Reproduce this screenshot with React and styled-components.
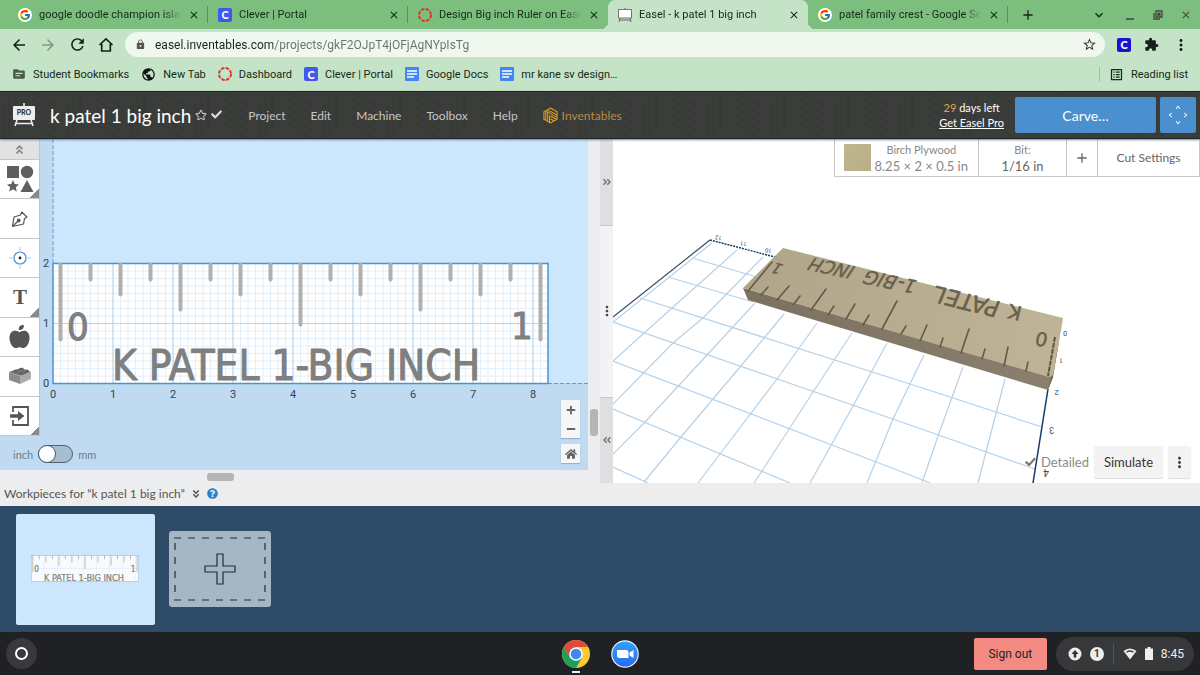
import React from 'react';
import styled, { createGlobalStyle, css } from 'styled-components';
import { FcGoogle } from 'react-icons/fc';
import {
  FaAngleDoubleDown,
  FaAngleDoubleLeft,
  FaAngleDoubleRight,
  FaAngleDoubleUp,
  FaAppleAlt,
  FaCheck,
  FaHome,
  FaMinus,
  FaPlus,
  FaQuestionCircle,
  FaRegStar,
} from 'react-icons/fa';
import {
  MdAdd,
  MdArrowBack,
  MdArrowForward,
  MdClose,
  MdExtension,
  MdKeyboardArrowDown,
  MdLock,
  MdMoreVert,
  MdOutlineListAlt,
  MdPublic,
  MdRefresh,
  MdStarBorder,
  MdTopic,
} from 'react-icons/md';

const tabs = [
  { title: 'google doodle champion islan', icon: 'google' },
  { title: 'Clever | Portal', icon: 'clever' },
  { title: 'Design Big inch Ruler on Easel', icon: 'canvas', last: true },
  { title: 'Easel - k patel 1 big inch', icon: 'easel', active: true },
  { title: 'patel family crest - Google Sea', icon: 'google' },
];

const bookmarks = [
  { title: 'Student Bookmarks', icon: 'folder' },
  { title: 'New Tab', icon: 'globe' },
  { title: 'Dashboard', icon: 'canvas' },
  { title: 'Clever | Portal', icon: 'clever' },
  { title: 'Google Docs', icon: 'docs' },
  { title: 'mr kane sv design…', icon: 'docs' },
];

const menus = ['Project', 'Edit', 'Machine', 'Toolbox', 'Help'];

const tools = [
  { name: 'Shapes', more: true, icon: <ShapesIcon /> },
  { name: 'Pen', icon: <PenIcon /> },
  { name: 'Drill point', icon: <DrillIcon /> },
  { name: 'Text', more: true, icon: <TextIcon /> },
  { name: 'Icons', icon: <FaAppleAlt size={23} /> },
  { name: 'Apps', icon: <BrickIcon /> },
  { name: 'Import', more: true, icon: <ImportIcon /> },
];

// tick ends below the top edge, one every half unit
const ticks = [78, 18, 33, 18, 48, 18, 33, 18, 63, 18, 33, 18, 48, 18, 33, 18, 78];

const bedLines = [
  'M79 119 L144 138',
  'M27 159 L297 245 L429 288',
  'M0 183 L297 286 L422 330',
  'M0 222 L297 336 L317 344',
  'M0 270 L177 344',
  'M0 328 L35 344',
  'M99 104 L0 183',
  'M55 138 L140 163',
  'M124 111 L59 169 L0 222',
  'M150 118 L90 179 L60 204 L0 265',
  'M142 164 L94 216 L32 283 L0 315',
  'M171 175 L127 228 L68 298 L31 343',
  'M204 184 L164 240 L107 315 L85 344',
  'M239 194 L200 253 L149 332 L141 344',
  'M274 204 L240 267 L197 344',
  'M311 216 L280 280 L254 344',
  'M350 228 L325 297 L309 344',
  'M392 240 L373 313 L365 344',
];

const boardTicks = [
  [135, 152, 159, 123],
  [148, 156, 155, 148],
  [164, 161, 176, 147],
  [180, 166, 187, 157],
  [198, 171, 213, 150],
  [215, 176, 221, 167],
  [233, 180, 242, 165],
  [250, 186, 256, 176],
  [269, 190, 284, 162],
  [288, 195, 293, 187],
  [307, 202, 314, 186],
  [327, 208, 330, 199],
  [348, 214, 356, 190],
  [369, 220, 372, 210],
  [391, 227, 395, 208],
  [413, 232, 415, 223],
];

function SiteIcon({ name }) {
  if (name === 'google') return <Round><FcGoogle size={12} /></Round>;
  if (name === 'clever') return <Clever>C</Clever>;
  if (name === 'canvas') {
    return (
      <svg width="14" height="14" viewBox="0 0 14 14" fill="none">
        <circle cx="7" cy="7" r="6" stroke="#d93a2b" strokeWidth="2" strokeDasharray="3.4 1.3" />
      </svg>
    );
  }
  if (name === 'docs') {
    return (
      <svg width="14" height="14" viewBox="0 0 14 14">
        <rect width="14" height="14" rx="1" fill="#4285f4" />
        <path d="M2 4h10M2 7h10M2 10h7" stroke="#fff" strokeWidth="1.3" />
      </svg>
    );
  }
  if (name === 'folder') return <MdTopic size={14} color="#4a5a4b" />;
  if (name === 'globe') return <MdPublic size={15} color="#111" />;
  return (
    <svg width="14" height="14" viewBox="0 0 14 14">
      <path d="M2 10l-1 4M12 10l1 4M1.500 12h11M7 0v2" stroke="#666" />
      <rect x="0.500" y="1.500" width="13" height="8.500" fill="#fff" stroke="#777" />
    </svg>
  );
}

function HomeIcon() {
  return (
    <svg width="16" height="16" viewBox="0 0 16 16" fill="none" stroke="currentColor" strokeWidth="1.700">
      <path d="M1.500 8L8 2l6.500 6M3.700 7v7h8.600V7" />
    </svg>
  );
}

function RestoreIcon() {
  return (
    <svg width="10" height="10" viewBox="0 0 10 10" fill="none" stroke="#444" strokeWidth="1.300">
      <path d="M3 1h6v6H3zM1 3v6h6" />
      <path d="M5 3.500h2v1.500H5z" />
    </svg>
  );
}

function ShapesIcon() {
  return (
    <svg width="28" height="28" viewBox="0 0 28 28" fill="#5f5f5f">
      <rect x="1" y="1" width="12" height="12" />
      <circle cx="21" cy="7" r="6.200" />
      <path d="M7 15l1.700 4 4.300.4-3.200 2.900 1 4.200L7 24.200l-3.800 2.300 1-4.200L1 19.400l4.300-.4z" />
      <path d="M21 15l6.500 12h-13z" />
    </svg>
  );
}

function PenIcon() {
  return (
    <svg width="18" height="18" viewBox="0 0 18 18" fill="none" stroke="#555" strokeWidth="1.200">
      <path d="M1.500 16.500L3 7l6.500-2 1.200-3L16 7l-2.500 1.700L12.500 14z" strokeLinejoin="round" />
      <path d="M2 16l4.500-4.500" />
      <circle cx="7.700" cy="10.500" r="1.300" fill="#555" />
    </svg>
  );
}

function DrillIcon() {
  return (
    <svg width="22" height="22" viewBox="0 0 22 22" fill="none">
      <circle cx="11" cy="11" r="6" stroke="#4a8fd3" strokeWidth="1.200" />
      <path d="M11 0v4M11 18v4M0 11h4M18 11h4" stroke="#a9cbee" />
      <circle cx="11" cy="11" r="1.400" fill="#222" />
    </svg>
  );
}

function TextIcon() {
  return (
    <svg width="20" height="20" viewBox="0 0 20 20">
      <text x="10" y="17" textAnchor="middle" fontFamily="Liberation Serif, serif" fontWeight="700" fontSize="21" fill="#555">T</text>
    </svg>
  );
}

function BrickIcon() {
  return (
    <svg width="24" height="18" viewBox="0 0 24 18">
      <path d="M1 5l12-4 10 4-10 4z" fill="#666" />
      <path d="M1 5l11 4v8L1 13z" fill="#8c8c8c" />
      <path d="M12 9l11-4v7l-11 5z" fill="#aaa" />
      <g fill="#555" stroke="#999" strokeWidth=".5">
        <ellipse cx="8" cy="4" rx="2.500" ry="1.300" />
        <ellipse cx="13.500" cy="2.200" rx="2.500" ry="1.300" />
        <ellipse cx="13" cy="6" rx="2.500" ry="1.300" />
        <ellipse cx="18.500" cy="4" rx="2.500" ry="1.300" />
      </g>
    </svg>
  );
}

function ImportIcon() {
  return (
    <svg width="20" height="20" viewBox="0 0 20 20">
      <path d="M3 6V1h15v18H3v-5" fill="none" stroke="#555" strokeWidth="1.800" />
      <path d="M0 8.300h8V5l6.500 5L8 15v-3.300H0z" fill="#555" />
    </svg>
  );
}

function EaselLogo() {
  return (
    <svg width="24" height="24" viewBox="0 0 24 24">
      <path d="M5 17l-2 6M19 17l2 6M3 20.500h18M12 0v4" stroke="#ededed" strokeWidth="1.600" />
      <rect x="1" y="3" width="22" height="14" rx="1" fill="#ededed" />
      <text x="12" y="12" textAnchor="middle" fontFamily="Lato, sans-serif" fontWeight="900" fontSize="7" fill="#333">PRO</text>
    </svg>
  );
}

function InventablesLogo() {
  return (
    <svg width="15" height="17" viewBox="0 0 16 18" fill="none" stroke="#e9a21b" strokeWidth="1.100">
      <path d="M8 1l7 4v8l-7 4-7-4V5z" />
      <path d="M3 5v8.500M5 6v8.500M7 9v7.500M3.500 4.500L8 7l7 4M5.500 3.300L15 8.500M8 9.500l6 3.500M8 12.500l4 2.500" />
    </svg>
  );
}

function Ruler() {
  const minor = [];
  for (let i = 1; i < 66; i += 1) minor.push(`M${i * 7.5} 0V120`);
  for (let i = 1; i < 16; i += 1) minor.push(`M0 ${i * 7.5}H495`);
  return (
    <g>
      <rect width="495" height="120" fill="#fff" />
      <path d={minor.join('')} stroke="#e2eef9" />
      <path d="M60 0V120M120 0V120M180 0V120M240 0V120M300 0V120M360 0V120M420 0V120M480 0V120M0 60H495" stroke="#b7d4f0" />
      <rect width="495" height="120" fill="none" stroke="#4c92cb" strokeWidth="1.500" />
      {ticks.map((end, i) => (
        <line key={i} x1={7.5 + i * 30} x2={7.5 + i * 30} y1="1" y2={end - 2} stroke="#b0b0b0" strokeWidth="4" strokeLinecap="round" />
      ))}
      <Lettering>
        <text x="14" y="76" fontSize="38">0</text>
        <text x="458" y="75" fontSize="38">1</text>
        <text x="59" y="116" fontSize="42">K PATEL 1-BIG INCH</text>
      </Lettering>
    </g>
  );
}

function Canvas() {
  return (
    <Drawing viewBox="0 0 588 331" preserveAspectRatio="xMinYMin slice">
      <rect width="588" height="331" fill="#bfdaf1" />
      <rect x="53" width="535" height="244" fill="#cbe6fd" />
      <path d="M53 0V124M548 244.500H588" stroke="#5b9fd8" strokeDasharray="4 2" />
      <g transform="translate(53 124.500)"><Ruler /></g>
      <g fontFamily="Roboto, sans-serif" fontSize="11" fill="#345" textAnchor="middle">
        {[0, 1, 2, 3, 4, 5, 6, 7, 8].map((n) => <text key={n} x={53 + n * 60} y="259">{n}</text>)}
        {[0, 1, 2].map((n) => <text key={n} x="46" y={248 - n * 60}>{n}</text>)}
      </g>
    </Drawing>
  );
}

function Preview() {
  return (
    <Drawing viewBox="0 0 587 344" preserveAspectRatio="xMinYMin slice">
      <defs>
        <linearGradient id="wood" x1="0" x2="1">
          <stop offset="0" stopColor="#b0a48a" />
          <stop offset="1" stopColor="#bfb497" />
        </linearGradient>
        <linearGradient id="edge" x1="0" x2="1">
          <stop offset="0" stopColor="#7b715e" />
          <stop offset="1" stopColor="#8b806e" />
        </linearGradient>
      </defs>
      <path d={bedLines.join('')} fill="none" stroke="#b4d1ea" strokeWidth="1.200" />
      <path d="M97 101L0 178" stroke="#3b4b60" strokeWidth="1.200" />
      <path d="M97 101L162 118" stroke="#173d63" strokeWidth="1.500" strokeDasharray="2 1" />
      <path d="M435 250L420 344" stroke="#123b66" strokeWidth="1.500" />
      <path d="M130 149L440 238L435 251L135 161z" fill="url(#edge)" />
      <path d="M440 238L435 251L448 192L450 179z" fill="#6f6554" />
      <path d="M170 109L450 179L440 236L436 238L130 149z" fill="url(#wood)" />
      {boardTicks.map(([x1, y1, x2, y2]) => (
        <line key={x1} x1={x1} y1={y1} x2={x2} y2={y2} stroke="#645a46" strokeWidth="1.600" strokeLinecap="round" />
      ))}
      <path d="M442 198L435 237" stroke="#5e543e" strokeWidth="2" strokeDasharray="5 1" />
      <Engraving>
        <text transform="translate(410 168) rotate(194)" fontSize="20">K</text>
        <text transform="translate(389 163) rotate(194) skewX(-8)" fontSize="23">PATEL</text>
        <text transform="translate(306 142) rotate(193) skewX(-14)" fontSize="19">1-</text>
        <text transform="translate(287 138) rotate(192) skewX(-18)" fontSize="19">BIG</text>
        <text transform="translate(244 128) rotate(192) skewX(-22)" fontSize="18">INCH</text>
        <text transform="translate(436 195) rotate(194)" fontSize="19">0</text>
        <text transform="translate(172 126) rotate(195) skewX(-22)" fontSize="15">1</text>
      </Engraving>
      <g fontFamily="Roboto, sans-serif" fontSize="7" fill="#334b66">
        <text transform="translate(454 192) rotate(180)">0</text>
        <text transform="translate(450 219) rotate(180)">1</text>
        <text transform="translate(446 251) rotate(180)" fontSize="8">2</text>
        <text transform="translate(441 288) rotate(180)" fontSize="9">3</text>
        <text transform="translate(436 330) rotate(180)" fontSize="10">4</text>
        <text transform="translate(159 110) rotate(190)" fontSize="6">10</text>
        <text transform="translate(134 103) rotate(190)" fontSize="6">11</text>
        <text transform="translate(109 97) rotate(190)" fontSize="6">12</text>
      </g>
    </Drawing>
  );
}

function ChromeIcon() {
  return (
    <svg width="28" height="28" viewBox="0 0 28 28">
      <circle cx="14" cy="14" r="14" fill="#fbc934" />
      <path d="M14 14L14 7H26.100A14 14 0 0 0 1.900 7L8 17.500z" fill="#dd4b3e" />
      <path d="M1.900 7A14 14 0 0 0 14 28L20 17.500L8 17.500z" fill="#1fa05a" />
      <circle cx="14" cy="14" r="6.800" fill="#fff" />
      <circle cx="14" cy="14" r="5.300" fill="#4285f4" />
    </svg>
  );
}

function ZoomIcon() {
  return (
    <svg width="28" height="28" viewBox="0 0 28 28">
      <defs>
        <linearGradient id="zoomBlue" x1="0" x2="0" y1="0" y2="1">
          <stop offset="0" stopColor="#2fa3fb" />
          <stop offset="1" stopColor="#2a68f0" />
        </linearGradient>
      </defs>
      <circle cx="14" cy="14" r="13.200" fill="url(#zoomBlue)" stroke="#e6f0fa" strokeWidth="1.200" />
      <path d="M6 10h9a2.500 2.500 0 0 1 2.500 2.500V18h-9A2.500 2.500 0 0 1 6 15.500zM18.500 12.500L22.500 10v8l-4-2.500z" fill="#fff" />
    </svg>
  );
}

function App() {
  return (
    <Page>
      <Global />
      <TabStrip>
        {tabs.map((tab, i) => (
          <Tab key={i} $active={tab.active} $last={tab.last}>
            <SiteIcon name={tab.icon} />
            <TabTitle type="button">{tab.title}</TabTitle>
            <IconButton type="button" aria-label="Close tab"><MdClose size={12} /></IconButton>
          </Tab>
        ))}
        <NewTab type="button" aria-label="New tab"><MdAdd size={16} /></NewTab>
        <WindowButtons>
          <IconButton type="button" aria-label="Search tabs"><MdKeyboardArrowDown size={16} /></IconButton>
          <IconButton type="button" aria-label="Minimize">
            <svg width="12" height="12" viewBox="0 0 12 12"><path d="M2 10h8" stroke="#444" strokeWidth="1.500" /></svg>
          </IconButton>
          <IconButton type="button" aria-label="Restore"><RestoreIcon /></IconButton>
          <IconButton type="button" aria-label="Close window"><MdClose size={12} color="#444" /></IconButton>
        </WindowButtons>
      </TabStrip>

      <AddressRow>
        <IconButton type="button" aria-label="Back"><MdArrowBack size={18} /></IconButton>
        <IconButton type="button" aria-label="Forward"><MdArrowForward size={18} color="#7f9a80" /></IconButton>
        <IconButton type="button" aria-label="Reload"><MdRefresh size={19} /></IconButton>
        <IconButton type="button" aria-label="Home"><HomeIcon /></IconButton>
        <AddressBar>
          <MdLock size={11} color="#555" />
          <Url aria-label="Address" defaultValue="easel.inventables.com/projects/gkF2OJpT4jOFjAgNYpIsTg" />
          <MdStarBorder size={15} color="#333" />
        </AddressBar>
        <Extensions>
          <Clever as="button" type="button" $dark>C</Clever>
          <IconButton type="button" aria-label="Extensions"><MdExtension size={15} /></IconButton>
          <IconButton type="button" aria-label="Menu"><MdMoreVert size={18} /></IconButton>
        </Extensions>
      </AddressRow>

      <Bookmarks>
        {bookmarks.map((b, i) => (
          <Bookmark key={i} href="#"><SiteIcon name={b.icon} />{b.title}</Bookmark>
        ))}
        <ReadingList type="button"><MdOutlineListAlt size={15} />Reading list</ReadingList>
      </Bookmarks>

      <Header>
        <Backdrop aria-hidden="true">
          <defs>
            <pattern id="weave" width="64" height="48" patternUnits="userSpaceOnUse">
              <path d="M4 12v36M10 8v36M16 4v36M32 0l24 14M32 8l24 14M32 16l24 14M32 24l24 14M32 32l24 14" fill="none" stroke="#343634" strokeWidth="3" />
            </pattern>
          </defs>
          <rect width="100%" height="100%" fill="url(#weave)" />
        </Backdrop>
        <EaselLogo />
        <Title>k patel 1 big inch</Title>
        <TitleIcons>
          <FaRegStar size={12} color="#c9c9c9" />
          <FaCheck size={11} color="#ddd" />
        </TitleIcons>
        <Menu>
          {menus.map((m) => <MenuButton key={m} type="button">{m}</MenuButton>)}
          <MenuButton type="button" $gold><InventablesLogo />Inventables</MenuButton>
        </Menu>
        <Trial>
          <div><b>29</b> days left</div>
          <a href="#">Get Easel Pro</a>
        </Trial>
        <Carve type="button">Carve…</Carve>
        <Jog type="button" aria-label="Jog machine">
          <svg width="20" height="20" viewBox="0 0 20 20" fill="none" stroke="#fff">
            <path d="M8 4l2-3 2 3M8 16l2 3 2-3M4 8l-3 2 3 2M16 8l3 2-3 2" />
          </svg>
        </Jog>
      </Header>

      <Workspace>
        <Designer>
          <CanvasArea>
            <Canvas />
            <Toolbar>
              <Collapse type="button" aria-label="Collapse tools"><FaAngleDoubleUp size={11} /></Collapse>
              {tools.map((t) => (
                <Tool key={t.name} type="button" aria-label={t.name} $more={t.more}>{t.icon}</Tool>
              ))}
            </Toolbar>
            <Units>
              inch
              <Switch type="checkbox" role="switch" />
              mm
            </Units>
            <ZoomButtons>
              <ZoomPair>
                <ZoomButton type="button" aria-label="Zoom in"><FaPlus size={10} /></ZoomButton>
                <ZoomButton type="button" aria-label="Zoom out"><FaMinus size={10} /></ZoomButton>
              </ZoomPair>
              <ZoomPair>
                <ZoomButton type="button" aria-label="Zoom home"><FaHome size={12} /></ZoomButton>
              </ZoomPair>
            </ZoomButtons>
          </CanvasArea>
          <VerticalTrack><VerticalThumb /></VerticalTrack>
          <HorizontalTrack><HorizontalThumb /></HorizontalTrack>
        </Designer>
        <Splitter>
          <SplitButton type="button" aria-label="Expand right"><FaAngleDoubleRight size={10} /></SplitButton>
          <SplitHandle><MdMoreVert size={16} /></SplitHandle>
          <SplitButton type="button" aria-label="Expand left"><FaAngleDoubleLeft size={10} /></SplitButton>
        </Splitter>
        <PreviewArea>
          <Preview />
          <Settings>
            <Material type="button">
              <Swatch />
              <Stack><small>Birch Plywood</small><span>8.25 × 2 × 0.5 in</span></Stack>
            </Material>
            <Bit type="button"><Stack $dark><small>Bit:</small><span>1/16 in</span></Stack></Bit>
            <AddBit type="button" aria-label="Add bit"><MdAdd size={16} /></AddBit>
            <CutSettings type="button">Cut Settings</CutSettings>
          </Settings>
          <PreviewControls>
            <Detailed><CheckBox type="checkbox" defaultChecked />Detailed</Detailed>
            <Simulate type="button">Simulate</Simulate>
            <More type="button" aria-label="More options"><MdMoreVert size={17} /></More>
          </PreviewControls>
        </PreviewArea>
      </Workspace>

      <Workpieces>
        Workpieces for “k patel 1 big inch”
        <FaAngleDoubleDown size={10} />
        <FaQuestionCircle size={11} color="#2d7fc4" />
      </Workpieces>
      <Tray>
        <Thumb type="button" aria-label="Workpiece 1">
          <Drawing viewBox="-70 -190 640 510"><Ruler /></Drawing>
        </Thumb>
        <AddPiece type="button" aria-label="Add workpiece">
          <svg width="102" height="76" viewBox="0 0 102 76" fill="none" stroke="#1e2d3b">
            <path d="M5 7H97M5 69H97" strokeDasharray="7 7" strokeWidth="1.200" />
            <path d="M6 12V66M96 12V66" strokeDasharray="7 7" strokeWidth="1.200" />
            <path d="M48 23h6v12h12v6H54v12h-6V41H36v-6h12z" strokeWidth="1.200" />
          </svg>
        </AddPiece>
      </Tray>

      <Shelf>
        <Launcher type="button" aria-label="Launcher"><Ring /></Launcher>
        <Apps>
          <AppButton type="button" aria-label="Chrome" $open><ChromeIcon /></AppButton>
          <AppButton type="button" aria-label="Zoom"><ZoomIcon /></AppButton>
        </Apps>
        <Status>
          <SignOut type="button">Sign out</SignOut>
          <StatusPill type="button">
            <svg width="14" height="14" viewBox="0 0 14 14">
              <circle cx="7" cy="7" r="6.500" fill="#eee" />
              <path d="M7 3l3.500 4H8.300v3.500H5.700V7H3.500z" fill="#333" />
            </svg>
            <Count>1</Count>
            <Divider />
            <svg width="14" height="12" viewBox="0 0 14 12">
              <path d="M7 11.500L.5 3Q7-2 13.500 3z" fill="#eee" />
              <path d="M3.500 4.200Q7 1.800 10.500 4.200" stroke="#37383a" strokeWidth="1.300" fill="none" />
            </svg>
            <svg width="8" height="13" viewBox="0 0 8 13"><path d="M2.500 0h3v1.500H8V13H0V1.500h2.500z" fill="#eee" /></svg>
            8:45
          </StatusPill>
        </Status>
      </Shelf>
    </Page>
  );
}

const Global = createGlobalStyle`
  * {
    box-sizing: border-box;
  }
  body {
    margin: 0;
    font-family: Lato, sans-serif;
  }
  button {
    margin: 0;
    padding: 0;
    border: 0;
    background: none;
    font: inherit;
    color: inherit;
  }
  a {
    color: inherit;
    text-decoration: none;
  }
  svg {
    display: block;
    flex: none;
  }
`;

const Page = styled.div`
  min-height: 100vh;
  display: flex;
  flex-direction: column;
`;

const centered = css`
  display: flex;
  align-items: center;
  justify-content: center;
`;

const IconButton = styled.button`
  ${centered}
  flex: none;
`;

const TabStrip = styled.div`
  display: flex;
  height: 29px;
  padding-left: 8px;
  background: #7bbe7d;
  color: #16291a;
  font: 11px Roboto, sans-serif;
`;

const Tab = styled.div`
  position: relative;
  flex: 0 1 200px;
  min-width: 0;
  display: flex;
  align-items: center;
  gap: 7px;
  padding: 0 8px 0 10px;
  border-radius: 7px 7px 0 0;
  background: ${(p) => (p.$active ? '#c5e3c6' : 'none')};

  ${(p) => !p.$active && !p.$last && css`
    &::after {
      content: '';
      position: absolute;
      right: 0;
      top: 6px;
      width: 1px;
      height: 17px;
      background: #549457;
    }
  `}
  ${(p) => p.$active && css`
    &::before, &::after {
      content: '';
      position: absolute;
      bottom: 0;
      left: -7px;
      width: 7px;
      height: 7px;
      background: radial-gradient(circle at 0 0, #7bbe7d 7px, #c5e3c6 7px);
    }
    &::after {
      left: auto;
      right: -7px;
      background: radial-gradient(circle at 100% 0, #7bbe7d 7px, #c5e3c6 7px);
    }
  `}
`;

const TabTitle = styled.button`
  flex: 1;
  min-width: 0;
  overflow: hidden;
  white-space: nowrap;
  text-align: left;
  mask-image: linear-gradient(to right, #000 88%, transparent);
`;

const Round = styled.span`
  ${centered}
  flex: none;
  width: 14px;
  height: 14px;
  border-radius: 50%;
  background: #fff;
`;

const Clever = styled.span`
  ${centered}
  flex: none;
  width: 14px;
  height: 14px;
  border-radius: 2px;
  background: ${(p) => (p.$dark ? '#1a14d0' : '#4257ee')};
  color: #fff;
  font: 900 11px Lato, sans-serif;
`;

const NewTab = styled(IconButton)`
  width: 40px;
`;

const WindowButtons = styled.div`
  margin-left: auto;
  display: flex;
  align-items: center;
  gap: 17px;
  padding-right: 8px;
`;

const AddressRow = styled.div`
  display: flex;
  align-items: center;
  gap: 11px;
  height: 31px;
  padding: 0 10px;
  background: #c5e3c6;
  color: #15211a;
`;

const AddressBar = styled.div`
  flex: 1;
  display: flex;
  align-items: center;
  gap: 9px;
  height: 25px;
  padding: 0 8px 0 10px;
  border-radius: 13px;
  background: #eff7ef;
`;

const Url = styled.input`
  flex: 1;
  min-width: 0;
  padding: 0;
  border: 0;
  outline: 0;
  font: 12px Roboto, sans-serif;
  color: transparent;
  background: linear-gradient(to right, #1c241d 118px, #6b736c 118px);
  background-clip: text;
`;

const Extensions = styled.div`
  display: flex;
  align-items: center;
  gap: 13px;
  padding-left: 1px;
`;

const Bookmarks = styled.nav`
  display: flex;
  align-items: center;
  gap: 12px;
  height: 31px;
  padding: 0 12px 3px;
  background: #c5e3c6;
  color: #16291a;
  font: 11px Roboto, sans-serif;
`;

const Bookmark = styled.a`
  display: flex;
  align-items: center;
  gap: 7px;
`;

const ReadingList = styled.button`
  display: flex;
  align-items: center;
  gap: 7px;
  margin-left: auto;
  padding-left: 9px;
  border-left: 1px solid #9cc29d;
`;

const Header = styled.header`
  position: relative;
  z-index: 1;
  display: flex;
  align-items: center;
  height: 48px;
  padding: 0 4px 0 12px;
  background: #3b3d3b;
  border-top: 1px solid #222;
  border-bottom: 1px solid #222;
  box-shadow: 0 1px 2px #6786a5;
  color: #fff;
`;

const Backdrop = styled.svg`
  position: absolute;
  inset: 0;
  z-index: -1;
  width: 100%;
  height: 100%;
  opacity: 0.4;
`;

const Title = styled.h1`
  margin: 0 0 0 14px;
  font-size: 19px;
  font-weight: 400;
  white-space: nowrap;
`;

const TitleIcons = styled.span`
  display: flex;
  gap: 4px;
  margin-left: 4px;
`;

const Menu = styled.nav`
  display: flex;
  gap: 25px;
  margin-left: 26px;
`;

const MenuButton = styled.button`
  display: flex;
  align-items: center;
  gap: 4px;
  font-size: 12px;
  color: ${(p) => (p.$gold ? '#b98a45' : '#c6c6c6')};
`;

const Trial = styled.div`
  margin-left: auto;
  padding-right: 11px;
  text-align: center;
  font-size: 11px;
  line-height: 15px;
  white-space: nowrap;

  b {
    font-weight: 400;
    color: #e0a54b;
  }
  a {
    text-decoration: underline;
  }
`;

const Carve = styled.button`
  flex: none;
  width: 141px;
  height: 36px;
  border-radius: 2px;
  background: #4a90cf;
  font-size: 14px;
`;

const Jog = styled(Carve)`
  ${centered}
  width: 36px;
  margin-left: 4px;
`;

const Workspace = styled.main`
  flex: 1;
  display: flex;
  min-height: 344px;
`;

const Designer = styled.section`
  flex: 0 0 50%;
  display: grid;
  grid-template-columns: 1fr 12px;
  grid-template-rows: 1fr 13px;
  background: #ebedf0;
`;

const CanvasArea = styled.div`
  position: relative;
  overflow: hidden;
`;

const Drawing = styled.svg`
  width: 100%;
  height: 100%;
`;

const Lettering = styled.g`
  font-family: 'DejaVu Sans Condensed', 'DejaVu Sans', sans-serif;
  fill: #7f7f7f;
  stroke: #7f7f7f;
  stroke-linejoin: round;
`;

const Engraving = styled.g`
  font-family: 'DejaVu Sans', sans-serif;
  fill: #6a5f49;
  stroke: #6a5f49;
  stroke-width: 0.4;
`;

const Toolbar = styled.div`
  position: absolute;
  top: 0;
  left: 0;
  display: flex;
  flex-direction: column;
  width: 40px;
  height: 297px;
  border-right: 1px solid #b9c6d2;
  background: #fff;
`;

const Collapse = styled.button`
  ${centered}
  height: 20px;
  background: #e2e2e2;
  color: #888;
`;

const Tool = styled.button`
  ${centered}
  flex: 1;
  border-top: 1px solid #c6c6c6;
  color: #555;
  background: ${(p) => (p.$more ? 'linear-gradient(135deg, transparent 50%, #8a8a8a 50%) right bottom / 9px 9px no-repeat' : 'none')};

  &:last-child {
    border-bottom: 1px solid #c6c6c6;
  }
`;

const Units = styled.label`
  position: absolute;
  left: 13px;
  bottom: 7px;
  display: flex;
  align-items: center;
  gap: 5px;
  font-size: 11px;
  color: #6f7f8e;
`;

const Switch = styled.input`
  appearance: none;
  width: 35px;
  height: 18px;
  margin: 0;
  padding: 0;
  border: 1px solid #4f5f6d;
  border-radius: 9px;
  background: #a5bed2;

  &::before {
    content: '';
    display: block;
    width: 16px;
    height: 16px;
    border-radius: 50%;
    background: #fff;
    box-shadow: 0 0 0 1px #4f5f6d;
  }
`;

const ZoomButtons = styled.div`
  position: absolute;
  right: 8px;
  bottom: 7px;
  display: flex;
  flex-direction: column;
  gap: 6px;
`;

const ZoomPair = styled.div`
  background: #f5f6f7;
  box-shadow: 0 1px 1px #9fb2c4;
`;

const ZoomButton = styled.button`
  ${centered}
  width: 19px;
  height: 19px;
  color: #666;
`;

const VerticalTrack = styled.div`
  display: flex;
  flex-direction: column;
  justify-content: flex-end;
  align-items: center;
  padding-bottom: 34px;
`;

const VerticalThumb = styled.div`
  width: 8px;
  height: 27px;
  border-radius: 3px;
  background: #b5b5b5;
`;

const HorizontalTrack = styled.div`
  grid-column: 1 / -1;
  display: flex;
  align-items: center;
  padding-left: 207px;
`;

const HorizontalThumb = styled.div`
  width: 27px;
  height: 8px;
  border-radius: 3px;
  background: #b5b5b5;
`;

const Splitter = styled.div`
  flex: none;
  display: flex;
  flex-direction: column;
  width: 13px;
  color: #777;
`;

const SplitButton = styled.button`
  ${centered}
  flex: 1;
  background: #dfdfdf;
`;

const SplitHandle = styled.div`
  ${centered}
  flex: 2;
  border: solid #c9c9c9;
  border-width: 1px 0;
  background: #f3f3f4;
  color: #444;
`;

const PreviewArea = styled.section`
  position: relative;
  flex: 1;
  min-width: 0;
  overflow: hidden;
  background: #fff;
`;

const Settings = styled.div`
  position: absolute;
  top: 0;
  right: 0;
  display: flex;
  height: 38px;
  border: 1px solid #c8c8c8;
  border-top: 0;
  background: #fff;
  color: #666;
  font-size: 12px;

  button + button {
    border-left: 1px solid #c8c8c8;
  }
`;

const Material = styled.button`
  display: flex;
  align-items: center;
  gap: 4px;
  padding: 0 10px 0 9px;
`;

const Swatch = styled.span`
  width: 27px;
  height: 27px;
  background: linear-gradient(135deg, #c0b68e, #b9ae87);
`;

const Stack = styled.span`
  display: flex;
  flex-direction: column;
  align-items: center;
  line-height: 16px;
  font-size: 13px;
  color: ${(p) => (p.$dark ? '#666' : '#888')};

  small {
    font-size: 11px;
    color: #888;
  }
`;

const Bit = styled.button`
  width: 88px;
`;

const AddBit = styled.button`
  ${centered}
  width: 31px;
`;

const CutSettings = styled.button`
  width: 102px;
`;

const PreviewControls = styled.div`
  position: absolute;
  right: 9px;
  bottom: 5px;
  display: flex;
  align-items: center;
  gap: 5px;
  font-size: 13px;
`;

const Detailed = styled.label`
  display: flex;
  align-items: center;
  gap: 5px;
  color: #8a8a8a;
`;

const CheckBox = styled.input`
  appearance: none;
  width: 11px;
  height: 10px;
  margin: 0;
  background: #777;
  clip-path: polygon(0 55%, 15% 40%, 38% 62%, 86% 5%, 100% 20%, 38% 95%);
`;

const Simulate = styled.button`
  width: 69px;
  height: 32px;
  border-radius: 2px;
  background: #f3f3f3;
  box-shadow: 0 1px 1px #ddd;
  color: #333;
`;

const More = styled(Simulate)`
  ${centered}
  width: 23px;
`;

const Workpieces = styled.div`
  display: flex;
  align-items: center;
  gap: 6px;
  height: 23px;
  padding: 0 4px 2px;
  background: #ededed;
  color: #555;
  font-size: 12px;
`;

const Tray = styled.section`
  display: flex;
  align-items: center;
  gap: 14px;
  height: 126px;
  padding: 0 16px;
  background: #2e4c67;
`;

const Thumb = styled.button`
  width: 139px;
  height: 111px;
  border-radius: 2px;
  background: #cbe6fd;
`;

const AddPiece = styled.button`
  border-radius: 3px;
  background: #a7b6c4;
`;

const Shelf = styled.footer`
  display: grid;
  grid-template-columns: 1fr auto 1fr;
  align-items: center;
  height: 43px;
  padding: 0 6px;
  background: #202124;
  color: #eee;
  font: 12px Roboto, sans-serif;
`;

const Launcher = styled.button`
  ${centered}
  width: 31px;
  height: 31px;
  border-radius: 50%;
  background: #38393c;
`;

const Ring = styled.span`
  width: 13px;
  height: 13px;
  border: 2px solid #fff;
  border-radius: 50%;
`;

const Apps = styled.div`
  display: flex;
  gap: 21px;
`;

const AppButton = styled.button`
  position: relative;

  ${(p) => p.$open && css`
    &::after {
      content: '';
      position: absolute;
      left: 10px;
      bottom: -5px;
      width: 8px;
      height: 2px;
      background: #eee;
    }
  `}
`;

const Status = styled.div`
  display: flex;
  justify-content: flex-end;
  align-items: center;
  gap: 9px;
`;

const SignOut = styled.button`
  width: 73px;
  height: 32px;
  border-radius: 2px;
  background: #f48b83;
  color: #222;
`;

const StatusPill = styled.button`
  display: flex;
  align-items: center;
  gap: 8px;
  height: 34px;
  padding: 0 10px 0 12px;
  border-radius: 17px;
  background: #37383a;
`;

const Count = styled.span`
  ${centered}
  width: 14px;
  height: 14px;
  border-radius: 50%;
  background: #eee;
  color: #333;
  font-size: 10px;
  font-weight: 700;
`;

const Divider = styled.span`
  width: 1px;
  height: 20px;
  margin: 0 1px;
  background: #555;
`;

export default App;
